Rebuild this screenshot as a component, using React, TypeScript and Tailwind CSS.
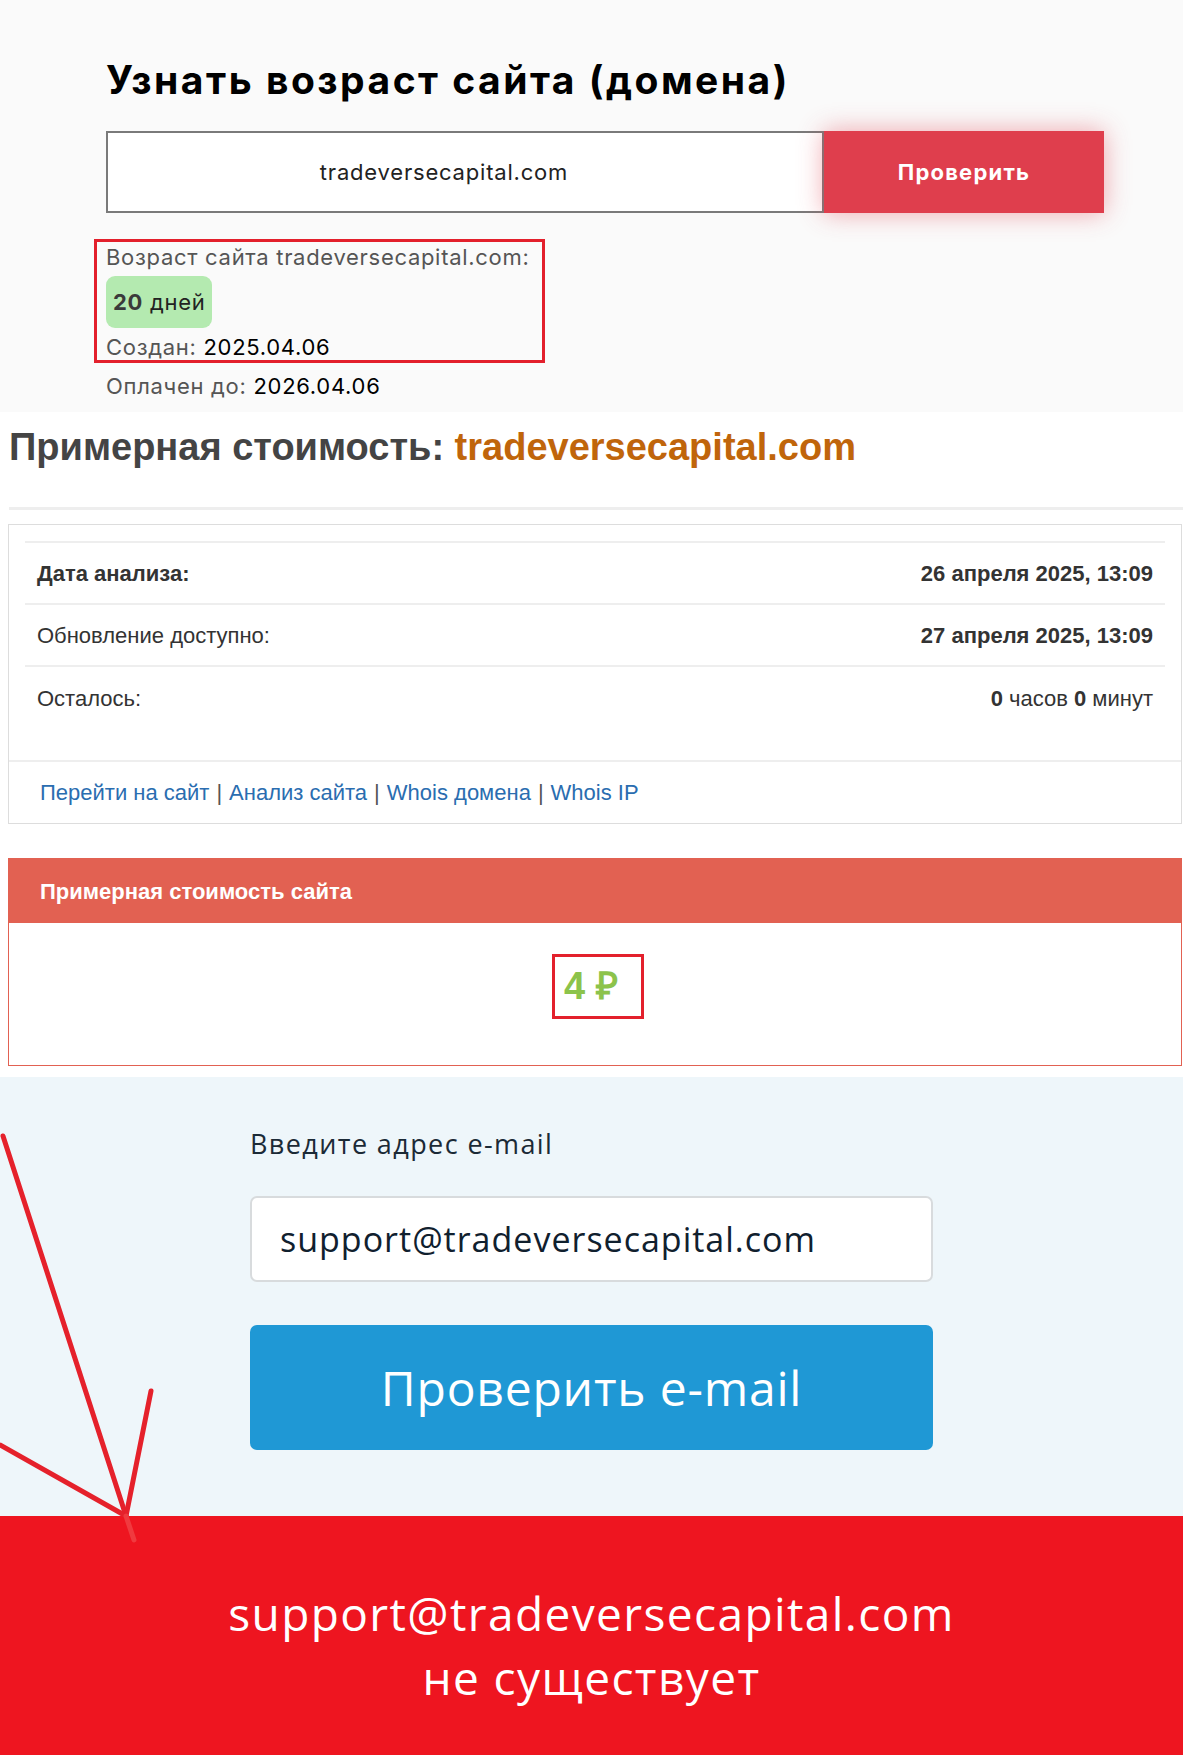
const inter = "font-['Inter','Noto_Sans',sans-serif]";
const arial = "font-['Liberation_Sans',Arial,sans-serif]";
const soft = "font-['Open_Sans','Noto_Sans',sans-serif]";

const rows = [
  { label: "Дата анализа:", value: "26 апреля 2025, 13:09", boldLabel: true },
  { label: "Обновление доступно:", value: "27 апреля 2025, 13:09", boldLabel: false },
];

const App = () => {
  return (
    <div className="relative w-[1183px] bg-white">
      {/* возраст домена */}
      <section className={`${inter} bg-[#fafafa] h-[412px] pl-[106px] pt-[52px]`}>
        <h1 className="text-[39px] leading-[56px] font-bold text-black tracking-[2.5px]">
          Узнать возраст сайта (домена)
        </h1>
        <div className="mt-[23px] flex w-[998px] h-[82px]">
          <div className="flex-1 flex items-center justify-center pr-[42px] bg-white border-2 border-[#7a7a7a] text-[22px] tracking-[0.8px] text-[#222]">
            tradeversecapital.com
          </div>
          <button className="w-[280px] bg-[#df3e4d] text-white text-[22px] tracking-[1.2px] font-bold shadow-[0_0_24px_rgba(223,62,77,0.45)]">
            Проверить
          </button>
        </div>
        <div className="mt-[26px] -ml-[12px] w-[451px] border-[3px] border-[#e3202c] pl-[9px] text-[22px] tracking-[0.7px] text-[#555]">
          <p className="leading-[30px]">Возраст сайта tradeversecapital.com:</p>
          <span className="inline-block mt-[4px] rounded-[9px] bg-[#b4eab0] px-[7px] leading-[52px] text-[#222]">
            <b className="text-[#3a3a3a]">20</b> дней
          </span>
          <p className="mt-[6px] leading-[26px]">
            Создан: <span className="text-black">2025.04.06</span>
          </p>
        </div>
        <p className="mt-[3px] leading-[40px] text-[22px] tracking-[0.7px] text-[#555]">
          Оплачен до: <span className="text-black">2026.04.06</span>
        </p>
      </section>

      {/* стоимость */}
      <section className={`${arial} bg-white pt-[14px] pb-[11px]`}>
        <h2 className="pl-[9px] text-[38px] leading-[42px] font-bold text-[#444]">
          Примерная стоимость: <span className="text-[#c0650b]">tradeversecapital.com</span>
        </h2>
        <div className="mt-[39px] ml-[9px] border-t-[3px] border-[#eeeeee]" />
        <div className="mt-[14px] ml-[8px] mr-[1px] border border-[#dddddd]">
          <div className="px-[16px] pt-[16px] pb-[30px]">
            <div className="border-t-2 border-[#eeeeee]" />
            {rows.map((r) => (
              <div
                key={r.label}
                className="flex justify-between items-center h-[62px] px-[12px] border-b-2 border-[#eeeeee] text-[22px] text-[#333]"
              >
                <span className={r.boldLabel ? "font-bold" : ""}>{r.label}</span>
                <span className="font-bold">{r.value}</span>
              </div>
            ))}
            <div className="flex justify-between items-center h-[63px] px-[12px] text-[22px] text-[#333]">
              <span>Осталось:</span>
              <span>
                <b>0</b> часов <b>0</b> минут
              </span>
            </div>
          </div>
          <div className="h-[63px] flex items-center pl-[31px] border-t-2 border-[#eeeeee] text-[22px] text-[#555]">
            <a className="text-[#2a6db0]">Перейти на сайт</a>
            <span className="px-[7px]">|</span>
            <a className="text-[#2a6db0]">Анализ сайта</a>
            <span className="px-[7px]">|</span>
            <a className="text-[#2a6db0]">Whois домена</a>
            <span className="px-[7px]">|</span>
            <a className="text-[#2a6db0]">Whois IP</a>
          </div>
        </div>

        <div className="mt-[34px] ml-[8px] mr-[1px] border border-[#e26152]">
          <div className="h-[64px] flex items-center pl-[31px] bg-[#e26152] text-white text-[22px] font-bold">
            Примерная стоимость сайта
          </div>
          <div className="h-[142px] flex items-start justify-center pt-[31px]">
            <span className="ml-[6px] inline-flex items-center w-[92px] h-[65px] pl-[9px] border-[3px] border-[#e3202c] text-[38px] font-bold text-[#8cc34b]">
              4 ₽
            </span>
          </div>
        </div>
      </section>

      {/* проверка e-mail */}
      <section className={`${soft} bg-[#eef6fa] h-[439px] pl-[250px] pt-[50px]`}>
        <p className="text-[27px] leading-[34px] tracking-[1.4px] text-[#1b2a36]">Введите адрес e-mail</p>
        <div className="mt-[35px] w-[683px] h-[86px] flex items-center pl-[28px] bg-white rounded-[7px] border-2 border-[#d8dbdd] text-[34px] tracking-[1px] text-[#10202e]">
          support@tradeversecapital.com
        </div>
        <button className="mt-[43px] w-[683px] h-[125px] bg-[#1f98d5] rounded-[7px] text-white text-[48px] tracking-[0.8px]">
          Проверить e-mail
        </button>
      </section>

      <section className={`${soft} bg-[#ee1520] h-[239px] pt-[65px] text-center text-white text-[46px] tracking-[1.4px] leading-[64px]`}>
        <p>support@tradeversecapital.com</p>
        <p>не существует</p>
      </section>

      {/* стрелка */}
      <svg
        className="absolute left-0 top-0 pointer-events-none"
        width="1183"
        height="1755"
        viewBox="0 0 1183 1755"
      >
        <g stroke="#e5212b" strokeWidth="5" strokeLinecap="round" fill="none">
          <line x1="3" y1="1136" x2="126" y2="1516" />
          <line x1="151" y1="1391" x2="126" y2="1516" />
          <line x1="0" y1="1445" x2="126" y2="1516" />
          <line x1="126" y1="1516" x2="134" y2="1540" stroke="#f03a3f" />
        </g>
      </svg>
    </div>
  );
};

export default App;
